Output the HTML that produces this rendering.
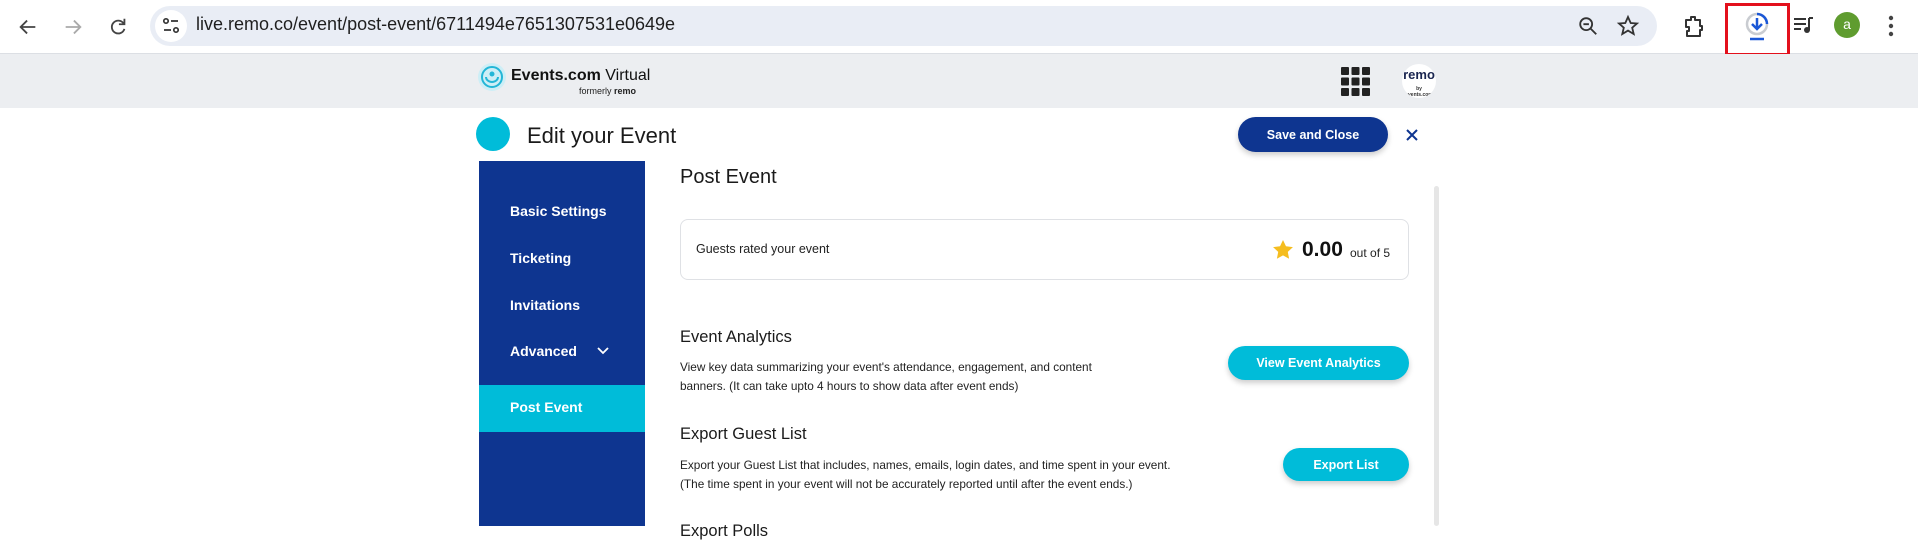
<!DOCTYPE html>
<html><head><meta charset="utf-8"><style>
*{margin:0;padding:0;box-sizing:border-box}
body{width:1918px;height:526px;overflow:hidden;background:#fff;font-family:"Liberation Sans",sans-serif;position:relative;color:#1a1a1a}
.a{position:absolute}
.top{left:0;top:0;width:1918px;height:54px;background:#fff;border-bottom:1px solid #dcdfe4}
.url{left:150px;top:6px;width:1507px;height:40px;border-radius:20px;background:#e9edf5}
.grey{left:0;top:54px;width:1918px;height:54px;background:#eceef1}
.side{left:479px;top:161px;width:166px;height:365px;background:#0e3590}
.si{position:absolute;left:31px;color:#fff;font-weight:bold;font-size:14px}
.btn{border-radius:20px;color:#fff;font-weight:bold;font-size:12.5px;display:flex;align-items:center;justify-content:center;box-shadow:0 3px 6px rgba(0,0,0,.2)}
.h{font-size:16.5px;color:#1a1a1a}
.p{font-size:11.8px;line-height:18.5px;color:#222}
</style></head><body>
<div class="a top"></div>
<svg class="a" style="left:17px;top:16px" width="22" height="22" viewBox="0 0 24 24"><path d="M20 12H5M11 5l-7 7 7 7" stroke="#444" stroke-width="2" fill="none"/></svg>
<svg class="a" style="left:62px;top:16px" width="22" height="22" viewBox="0 0 24 24"><path d="M4 12h15M13 5l7 7-7 7" stroke="#aaa" stroke-width="2" fill="none"/></svg>
<svg class="a" style="left:107px;top:16px" width="22" height="22" viewBox="0 0 24 24"><path d="M18 8A7 7 0 1 0 19 14" stroke="#444" stroke-width="2" fill="none"/><path d="M19 3v6h-6" stroke="#444" stroke-width="2" fill="none"/></svg>
<div class="a url"></div>
<div class="a" style="left:155px;top:10px;width:32px;height:32px;border-radius:50%;background:#fff"></div>
<svg class="a" style="left:161px;top:16px" width="20" height="20" viewBox="0 0 20 20"><circle cx="5" cy="5" r="2.2" stroke="#333" stroke-width="1.7" fill="none"/><path d="M10 5h7M3 14h7" stroke="#333" stroke-width="1.8"/><circle cx="15" cy="14" r="2.2" stroke="#333" stroke-width="1.7" fill="none"/></svg>
<div class="a" style="left:196px;top:14px;font-size:18px;color:#1f1f1f">live.remo.co/event/post-event/6711494e7651307531e0649e</div>
<svg class="a" style="left:1577px;top:15px" width="22" height="22" viewBox="0 0 24 24"><circle cx="10" cy="10" r="6.5" stroke="#333" stroke-width="2" fill="none"/><path d="M7 10h6M15 15l6 6" stroke="#333" stroke-width="2"/></svg>
<svg class="a" style="left:1616px;top:14px" width="24" height="24" viewBox="0 0 24 24"><path d="M12 3l2.7 6 6.3.5-4.8 4.2 1.5 6.3L12 16.6 6.3 20l1.5-6.3L3 9.5 9.3 9z" stroke="#333" stroke-width="1.8" fill="none"/></svg>
<svg class="a" style="left:1682px;top:13px" width="24" height="26" viewBox="0 0 24 26"><path d="M4 7h5V4h4v3h5v6h2v4h-2v6H5v-5h2v-4H4z" stroke="#333" stroke-width="2" fill="none" stroke-linejoin="round"/></svg>
<div class="a" style="left:1725px;top:3px;width:65px;height:53px;border:3px solid #e3101c"></div>
<svg class="a" style="left:1743px;top:11px" width="28" height="30" viewBox="0 0 28 30"><circle cx="14" cy="13" r="10" stroke="#c9ccd1" stroke-width="2.5" fill="none"/><path d="M14 3a10 10 0 0 1 10 10" stroke="#1a57d6" stroke-width="2.5" fill="none"/><path d="M14 7v11M9 13l5 5 5-5" stroke="#1a57d6" stroke-width="2.5" fill="none"/><path d="M7 28h14" stroke="#1a57d6" stroke-width="2.5"/></svg>
<svg class="a" style="left:1793px;top:16px" width="22" height="20" viewBox="0 0 22 20"><path d="M1 3h12M1 8h12M1 13h7" stroke="#333" stroke-width="2"/><path d="M16 2v12" stroke="#333" stroke-width="2"/><circle cx="14" cy="14" r="3" fill="#333"/><path d="M16 2h4" stroke="#333" stroke-width="2"/></svg>
<div class="a" style="left:1834px;top:12px;width:26px;height:26px;border-radius:50%;background:#5f9c2f;color:#fff;font-size:14px;text-align:center;line-height:25px">a</div>
<svg class="a" style="left:1887px;top:14px" width="8" height="24" viewBox="0 0 8 24"><circle cx="4" cy="4" r="2.2" fill="#444"/><circle cx="4" cy="12" r="2.2" fill="#444"/><circle cx="4" cy="20" r="2.2" fill="#444"/></svg>

<div class="a grey"></div>
<svg class="a" style="left:477px;top:62px" width="30" height="30" viewBox="0 0 30 30"><circle cx="15" cy="15" r="14" fill="#cdeef6"/><circle cx="15" cy="15" r="10" stroke="#23b6d7" stroke-width="2" fill="none"/><path d="M9 15a6 5 0 0 0 12 0" stroke="#23b6d7" stroke-width="2" fill="none"/><circle cx="15" cy="12" r="2.5" fill="#23b6d7"/></svg>
<div class="a" style="left:511px;top:67px;font-size:16px;color:#111"><b>Events.com</b> Virtual</div>
<div class="a" style="left:579px;top:86px;font-size:9px;color:#222">formerly <b>remo</b></div>
<svg class="a" style="left:1341px;top:67px" width="29" height="29" viewBox="0 0 29 29"><g fill="#222"><rect x="0" y="0" width="8" height="8" rx="1"/><rect x="10.5" y="0" width="8" height="8" rx="1"/><rect x="21" y="0" width="8" height="8" rx="1"/><rect x="0" y="10.5" width="8" height="8" rx="1"/><rect x="10.5" y="10.5" width="8" height="8" rx="1"/><rect x="21" y="10.5" width="8" height="8" rx="1"/><rect x="0" y="21" width="8" height="8" rx="1"/><rect x="10.5" y="21" width="8" height="8" rx="1"/><rect x="21" y="21" width="8" height="8" rx="1"/></g></svg>
<div class="a" style="left:1402px;top:64px;width:34px;height:34px;border-radius:50%;background:#fff;overflow:hidden;font-size:13px;font-weight:bold;color:#1a2550;text-align:center;line-height:22px">remo<div style="font-size:5px;line-height:6px;color:#333">by events.com</div></div>

<div class="a" style="left:476px;top:117px;width:34px;height:34px;border-radius:50%;background:#00bcd9"></div>
<div class="a" style="left:527px;top:123px;font-size:22px;color:#1a1a1a">Edit your Event</div>
<div class="a btn" style="left:1238px;top:117px;width:150px;height:35px;background:#0e3590">Save and Close</div>
<svg class="a" style="left:1405px;top:128px" width="14" height="14" viewBox="0 0 14 14"><path d="M2 2l10 10M12 2L2 12" stroke="#0e3590" stroke-width="2"/></svg>

<div class="a side">
<div class="si" style="top:42px">Basic Settings</div>
<div class="si" style="top:89px">Ticketing</div>
<div class="si" style="top:136px">Invitations</div>
<div class="si" style="top:182px">Advanced</div>
<svg style="position:absolute;left:118px;top:186px" width="12" height="8" viewBox="0 0 12 8"><path d="M1 1l5 5 5-5" stroke="#fff" stroke-width="1.8" fill="none"/></svg>
<div style="position:absolute;left:0;top:224px;width:166px;height:47px;background:#00bcd9"></div>
<div class="si" style="top:238px">Post Event</div>
</div>

<div class="a" style="left:680px;top:166px;font-size:20px">Post Event</div>
<div class="a" style="left:680px;top:219px;width:729px;height:61px;border:1.5px solid #dfe1e5;border-radius:8px"></div>
<div class="a" style="left:696px;top:242px;font-size:12.5px;color:#222">Guests rated your event</div>
<svg class="a" style="left:1273px;top:240px" width="20" height="19" viewBox="0 0 24 23"><path d="M12 0l3.6 7.6 8.4 1-6.2 5.8 1.6 8.3L12 18.6 4.6 22.7l1.6-8.3L0 8.6l8.4-1z" fill="#f5bd1f"/></svg>
<div class="a" style="left:1302px;top:238px;font-size:21px;font-weight:bold;color:#111">0.00</div>
<div class="a" style="left:1350px;top:246px;font-size:12px;color:#222">out of 5</div>
<div class="a" style="left:1434px;top:186px;width:5px;height:340px;background:#e6e6e6;border-radius:3px"></div>

<div class="a h" style="left:680px;top:328px">Event Analytics</div>
<div class="a p" style="left:680px;top:358px">View key data summarizing your event's attendance, engagement, and content<br>banners. (It can take upto 4 hours to show data after event ends)</div>
<div class="a btn" style="left:1228px;top:346px;width:181px;height:34px;background:#00bcd9">View Event Analytics</div>

<div class="a h" style="left:680px;top:425px">Export Guest List</div>
<div class="a p" style="left:680px;top:456px">Export your Guest List that includes, names, emails, login dates, and time spent in your event.<br>(The time spent in your event will not be accurately reported until after the event ends.)</div>
<div class="a btn" style="left:1283px;top:448px;width:126px;height:33px;background:#00bcd9">Export List</div>
<div class="a h" style="left:680px;top:522px">Export Polls</div>
</body></html>
